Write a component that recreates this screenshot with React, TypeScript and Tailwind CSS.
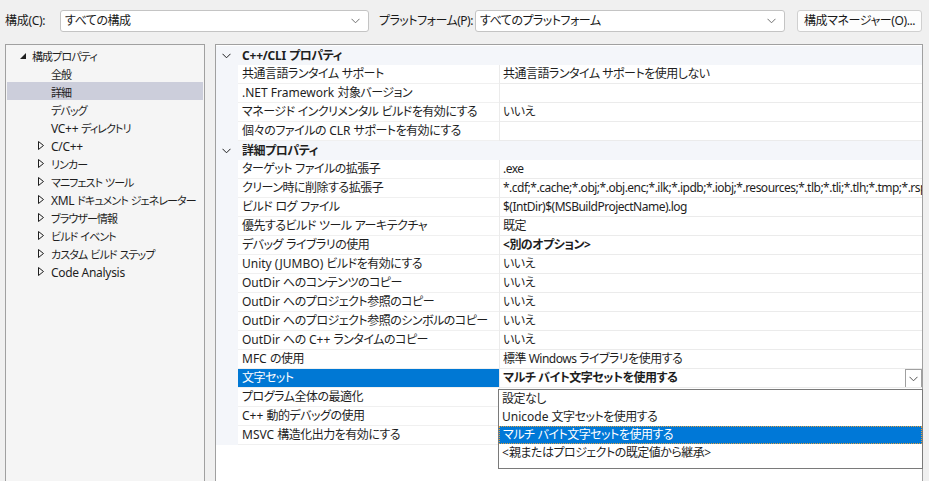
import { ReactNode } from "react";

const font = "font-['Noto_Sans','Noto_Sans_CJK_JP',sans-serif] [font-feature-settings:'palt']";

// split a label into ascii / cjk runs so each can be spaced on its own
function Txt({ s, cjk, latin }: { s: string; cjk: string; latin: string }) {
  const runs = s.match(/[\x00-\x7f]+|[^\x00-\x7f]+/g) ?? [];
  return (
    <>
      {runs.map((r, i) => (
        <span key={i} className={/^[\x00-\x7f]/.test(r) ? latin : cjk}>
          {r}
        </span>
      ))}
    </>
  );
}

function Chevron({ className = "" }: { className?: string }) {
  return (
    <svg width="9" height="6" viewBox="0 0 9 6" className={className}>
      <path d="M0.5 0.8 L4.5 4.8 L8.5 0.8" fill="none" stroke="currentColor" strokeWidth="1" />
    </svg>
  );
}

function Combo({ value, width }: { value: string; width: string }) {
  return (
    <div className={`${width} h-[22px] bg-white border border-[#c4c4c4] rounded-[3px] flex items-center pl-[4px] pr-[8px]`}>
      <span className="flex-1 text-[12px] tracking-[-0.5px] text-[#1a1a1a] truncate">{value}</span>
      <Chevron className="text-[#707070]" />
    </div>
  );
}

type TreeItem = { label: string; depth: 0 | 1; icon?: "open" | "closed"; selected?: boolean };

const tree: TreeItem[] = [
  { label: "構成プロパティ", depth: 0, icon: "open" },
  { label: "全般", depth: 1 },
  { label: "詳細", depth: 1, selected: true },
  { label: "デバッグ", depth: 1 },
  { label: "VC++ ディレクトリ", depth: 1 },
  { label: "C/C++", depth: 1, icon: "closed" },
  { label: "リンカー", depth: 1, icon: "closed" },
  { label: "マニフェスト ツール", depth: 1, icon: "closed" },
  { label: "XML ドキュメント ジェネレーター", depth: 1, icon: "closed" },
  { label: "ブラウザー情報", depth: 1, icon: "closed" },
  { label: "ビルド イベント", depth: 1, icon: "closed" },
  { label: "カスタム ビルド ステップ", depth: 1, icon: "closed" },
  { label: "Code Analysis", depth: 1, icon: "closed" },
];

function TreeRow({ item }: { item: TreeItem }) {
  return (
    <div className={`h-[18px] flex items-center relative ${item.selected ? "bg-[#cccedb]" : ""}`}>
      {item.icon === "open" && (
        <svg width="6" height="6" viewBox="0 0 6 6" className="absolute left-[13px] top-[7px]">
          <polygon points="6,0 6,6 0,6" fill="#1e1e1e" />
        </svg>
      )}
      {item.icon === "closed" && (
        <svg width="6" height="9" viewBox="0 0 6 9" className="absolute left-[31px] top-[5px]">
          <polygon points="0.5,0.5 5.5,4.5 0.5,8.5" fill="none" stroke="#1e1e1e" strokeWidth="1" />
        </svg>
      )}
      <span
        className={`text-[#1e1e1e] whitespace-nowrap leading-[18px] pt-[1px] ${item.depth === 0 ? "pl-[25px]" : "pl-[44px]"}`}
      >
        <Txt s={item.label} cjk="text-[11px] tracking-[-0.9px]" latin="text-[12px] tracking-[-0.3px]" />
      </span>
    </div>
  );
}

type Prop = { name: string; value?: string; bold?: boolean; selected?: boolean };

const cli: Prop[] = [
  { name: "共通言語ランタイム サポート", value: "共通言語ランタイム サポートを使用しない" },
  { name: ".NET Framework 対象バージョン" },
  { name: "マネージド インクリメンタル ビルドを有効にする", value: "いいえ" },
  { name: "個々のファイルの CLR サポートを有効にする" },
];

const detail: Prop[] = [
  { name: "ターゲット ファイルの拡張子", value: ".exe" },
  {
    name: "クリーン時に削除する拡張子",
    value: "*.cdf;*.cache;*.obj;*.obj.enc;*.ilk;*.ipdb;*.iobj;*.resources;*.tlb;*.tli;*.tlh;*.tmp;*.rsp",
  },
  { name: "ビルド ログ ファイル", value: "$(IntDir)$(MSBuildProjectName).log" },
  { name: "優先するビルド ツール アーキテクチャ", value: "既定" },
  { name: "デバッグ ライブラリの使用", value: "<別のオプション>", bold: true },
  { name: "Unity (JUMBO) ビルドを有効にする", value: "いいえ" },
  { name: "OutDir へのコンテンツのコピー", value: "いいえ" },
  { name: "OutDir へのプロジェクト参照のコピー", value: "いいえ" },
  { name: "OutDir へのプロジェクト参照のシンボルのコピー", value: "いいえ" },
  { name: "OutDir への C++ ランタイムのコピー", value: "いいえ" },
  { name: "MFC の使用", value: "標準 Windows ライブラリを使用する" },
  { name: "文字セット", value: "マルチ バイト文字セットを使用する", bold: true, selected: true },
  { name: "プログラム全体の最適化" },
  { name: "C++ 動的デバッグの使用" },
  { name: "MSVC 構造化出力を有効にする" },
];

function Section({ title }: { title: string }) {
  return (
    <div className="h-[19px] flex items-center bg-[#f4f6fa] relative">
      <Chevron className="absolute left-[6px] top-[7px] text-[#1e1e1e]" />
      <span className="pl-[26px] text-[12px] font-bold text-[#1e1e1e] whitespace-nowrap">
        <Txt s={title} cjk="tracking-[-0.5px]" latin="tracking-[-0.2px]" />
      </span>
    </div>
  );
}

function PropRow({ p }: { p: Prop }) {
  return (
    <div className="h-[19px] flex bg-[#f4f6fa]">
      <div className="w-[22px] shrink-0" />
      <div
        className={`w-[261px] shrink-0 flex items-center pl-[4px] border-b border-[#f0f0f0] whitespace-nowrap overflow-hidden ${
          p.selected ? "bg-[#0078d4] text-white border-[#0078d4]" : "bg-white text-[#1e1e1e]"
        }`}
      >
        <span className="text-[12px]">
          <Txt s={p.name} cjk="tracking-[-0.5px]" latin="tracking-[0px]" />
        </span>
      </div>
      <div className="flex-1 min-w-0 flex items-center bg-white border-l border-b border-[#ebebeb] pl-[3px] relative overflow-hidden">
        <span className={`text-[12px] text-[#1e1e1e] whitespace-nowrap ${p.bold ? "font-bold" : ""}`}>
          {p.value && <Txt s={p.value} cjk="tracking-[-0.5px]" latin="tracking-[-0.5px]" />}
        </span>
        {p.selected && (
          <div className="absolute right-0 top-0 w-[17px] h-[19px] border border-[#a0a0a0] bg-white flex items-center justify-center">
            <Chevron className="text-[#555]" />
          </div>
        )}
      </div>
    </div>
  );
}

const options = ["設定なし", "Unicode 文字セットを使用する", "マルチ バイト文字セットを使用する", "<親またはプロジェクトの既定値から継承>"];

function DropList() {
  return (
    <div className="absolute left-[282px] top-[344px] w-[425px] h-[80px] bg-white border border-[#7a7a7a]">
      {options.map((o, i) => (
        <div
          key={o}
          className={`h-[18px] flex items-center pl-[3px] text-[12px] whitespace-nowrap ${
            i === 2 ? "bg-[#0078d7] text-white border border-dotted border-[#e0a040]" : "text-[#1e1e1e]"
          }`}
        >
          <span>
            <Txt s={o} cjk="tracking-[-0.5px]" latin="tracking-[0px]" />
          </span>
        </div>
      ))}
    </div>
  );
}

function Panel({ children, className }: { children: ReactNode; className: string }) {
  return <div className={`border-l border-t border-r border-[#a0a0a0] ${className}`}>{children}</div>;
}

export default function App() {
  return (
    <div className={`w-[929px] h-[481px] bg-[#f0f0f0] overflow-hidden ${font}`}>
      <div className="h-[44px] flex items-start pt-[10px] pl-[5px]">
        <div className="w-[55px] h-[22px] flex items-center text-[12px] tracking-[-0.3px] text-[#1a1a1a]">構成(C):</div>
        <Combo value="すべての構成" width="w-[309px]" />
        <div className="w-[96px] ml-[10px] h-[22px] flex items-center text-[12px] tracking-[-0.5px] text-[#1a1a1a] whitespace-nowrap">
          プラットフォーム(P):
        </div>
        <Combo value="すべてのプラットフォーム" width="w-[310px]" />
        <button className="ml-[12px] w-[125px] h-[22px] bg-[#fdfdfd] border border-[#d0d0d0] rounded-[3px] text-[12px] tracking-[-0.4px] text-[#1a1a1a] flex items-center justify-center">
          構成マネージャー(O)...
        </button>
      </div>
      <div className="flex pl-[5px] h-[437px]">
        <Panel className="w-[200px] h-full bg-[#f5f5f5] pt-[1px] px-[1px]">
          {tree.map((t) => (
            <TreeRow key={t.label} item={t} />
          ))}
        </Panel>
        <Panel className="ml-[10px] w-[708px] h-full bg-white relative">
          <div className="pt-[1px]">
            <Section title="C++/CLI プロパティ" />
            {cli.map((p) => (
              <PropRow key={p.name} p={p} />
            ))}
            <Section title="詳細プロパティ" />
            {detail.map((p) => (
              <PropRow key={p.name} p={p} />
            ))}
          </div>
          <DropList />
        </Panel>
      </div>
    </div>
  );
}
